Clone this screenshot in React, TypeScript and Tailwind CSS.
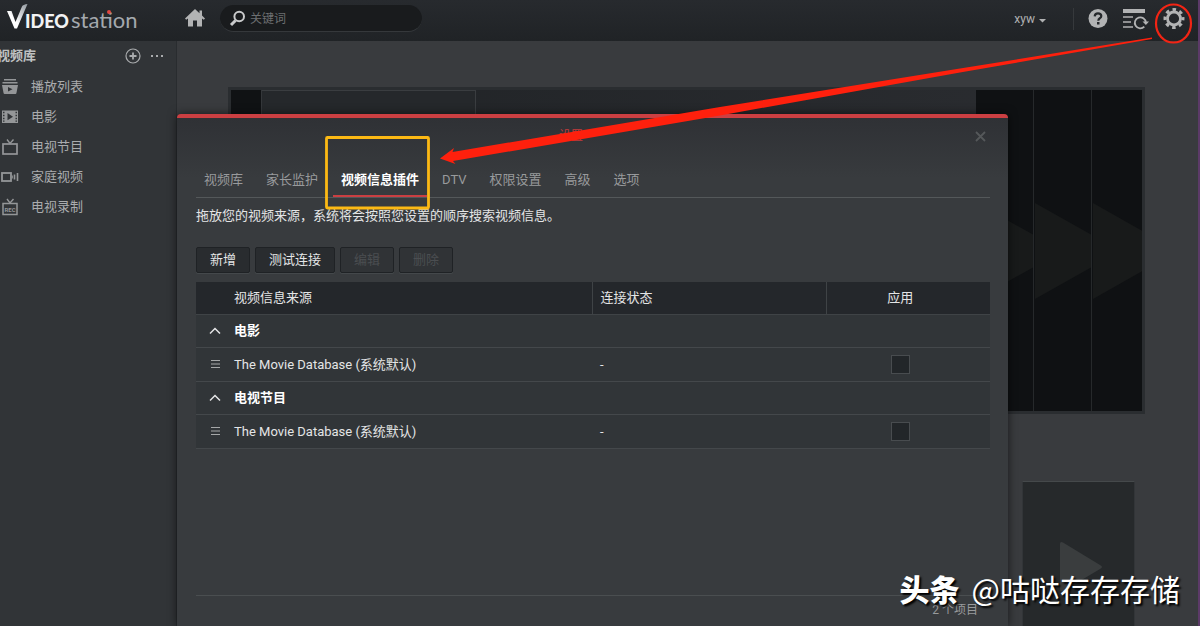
import { useState, type ReactNode } from 'react';

const libraryItems = [
  { id: 'playlist', label: '播放列表', icon: <PlaylistIcon /> },
  { id: 'movie', label: '电影', icon: <MovieIcon /> },
  { id: 'tvshow', label: '电视节目', icon: <TvIcon /> },
  { id: 'home', label: '家庭视频', icon: <CamcorderIcon /> },
  { id: 'record', label: '电视录制', icon: <RecordingIcon /> },
];

const tabs = ['视频库', '家长监护', '视频信息插件', 'DTV', '权限设置', '高级', '选项'];

const actions = [
  { label: '新增', disabled: false },
  { label: '测试连接', disabled: false },
  { label: '编辑', disabled: true },
  { label: '删除', disabled: true },
];

const pluginGroups = [
  { name: '电影', sources: ['The Movie Database (系统默认)'] },
  { name: '电视节目', sources: ['The Movie Database (系统默认)'] },
];

function PlaylistIcon() {
  return (
    <svg width="18" height="16" viewBox="0 0 18 16" fill="currentColor">
      <path d="M3 0h12v1.6H3zM1.500 3h15v1.600h-15z" />
      <path fillRule="evenodd" d="M1 6h16l-1.600 8.200q-.2.8-1 .8H3.600q-.8 0-1-.8zM7 8v4.600l4.500-2.300z" />
    </svg>
  );
}

function MovieIcon() {
  return (
    <svg width="18" height="16" viewBox="0 0 18 16" fill="currentColor">
      <path
        fillRule="evenodd"
        d="M1 1.500h16V14H1zM2 2.800v1.500h1.500V2.800zM2 5.800v1.500h1.500V5.800zM2 8.700v1.500h1.500V8.700zM2 11.500v1.300h1.500V11.500zM14.500 2.800v1.500H16V2.800zM14.500 5.800v1.500H16V5.800zM14.500 8.700v1.500H16V8.700zM14.500 11.500v1.300H16V11.500zM6.500 4.100v7.200l5.500-3.600z"
      />
    </svg>
  );
}

function TvIcon() {
  return (
    <svg width="18" height="18" viewBox="0 0 18 18" fill="none" stroke="currentColor">
      <rect x="2" y="6" width="14" height="10" strokeWidth="1.700" />
      <path d="M6 1.500L9 5.500L12.500 1.500" strokeWidth="1.400" />
    </svg>
  );
}

function CamcorderIcon() {
  return (
    <svg width="18" height="16" viewBox="0 0 18 16" fill="none" stroke="currentColor">
      <rect x="1" y="4" width="9" height="8" strokeWidth="1.800" />
      <path d="M13.500 5.500v5M16.500 4v8" strokeWidth="1.600" />
      <path d="M11.300 6.500v3" />
    </svg>
  );
}

function RecordingIcon() {
  return (
    <svg width="18" height="18" viewBox="0 0 18 18" fill="none" stroke="currentColor">
      <rect x="2" y="5.500" width="14" height="11" strokeWidth="1.500" />
      <path d="M6 1L9 5L12.500 1" strokeWidth="1.400" />
      <text
        x="9"
        y="13.500"
        fontSize="6"
        fontWeight="700"
        fontFamily="Roboto, sans-serif"
        textAnchor="middle"
        fill="currentColor"
        stroke="none"
      >
        REC
      </text>
    </svg>
  );
}

function Logo() {
  return (
    <a href="#" aria-label="Video Station" className="relative flex h-10 w-[131px] items-center">
      <svg width="135" height="32" viewBox="0 0 135 32" className="shrink-0">
        <defs>
          <linearGradient id="logo-v" x1="0" x2="1" y1="1" y2="0">
            <stop offset="0.350" stopColor="#fff" />
            <stop offset="1" stopColor="#8f969d" />
          </linearGradient>
        </defs>
        <path d="M0 8h4.500l4 11L15 3.500Q16 1.500 20.500 1L10 25.500H7.500z" fill="url(#logo-v)" />
        <text x="18" y="25" fontSize="18" fontWeight="900" fontFamily="Lato, sans-serif" fill="#f2f2f3">
          IDEO
        </text>
        <text x="64" y="25" fontSize="22" fontWeight="400" fontFamily="Lato, sans-serif" fill="#a4a9ae">
          station
        </text>
        <circle cx="102" cy="9" r="2" fill="#e0453f" />
      </svg>
    </a>
  );
}

function IconButton({ label, children }: { label: string; children: ReactNode }) {
  return (
    <button aria-label={label} className="flex items-center justify-center text-[#b2b3b4] hover:text-white">
      {children}
    </button>
  );
}

function Header() {
  return (
    <header className="flex h-[41px] items-center bg-linear-to-b from-[#272a2e] to-[#202326] pb-1 pl-[7px] pr-[13px]">
      <Logo />
      <div className="ml-[47px] flex">
        <IconButton label="首页">
          <svg width="20" height="20" viewBox="0 0 20 20" fill="currentColor">
            <path d="M10 0L0 9.500l1.200 1.200L3 9.500V17.500h5v-6h4v6h5v-8l1.800 1.200L20 9.500l-3-3V1.500h-2.500v2.700z" />
          </svg>
        </IconButton>
      </div>
      <label className="ml-[15px] flex h-[27px] w-[202px] items-center rounded-full border-b border-[#35383b] bg-[#191b1d] pl-[9px]">
        <svg width="18" height="18" viewBox="0 0 18 18" fill="none" stroke="#c9cacb" className="shrink-0">
          <circle cx="10.200" cy="7.500" r="4.800" strokeWidth="2" />
          <path d="M6.500 11.500L2 16" strokeWidth="3" />
        </svg>
        <input
          type="text"
          placeholder="关键词"
          className="ml-[3px] w-full bg-transparent pt-px text-xs text-[#ccc] outline-none placeholder:text-[#6d6f71]"
        />
      </label>

      <div className="ml-auto flex items-center">
        <button className="flex items-center gap-1 text-xs text-[#b0b1b2]">
          xyw
          <svg width="7" height="4" viewBox="0 0 7 4" fill="currentColor" className="mt-1">
            <path d="M0 0h7L3.500 3.500z" />
          </svg>
        </button>
        <div className="ml-[27px] h-[22px] w-px bg-[#36393c]" />
        <div className="ml-[14px] flex items-center gap-[14px]">
          <IconButton label="帮助">
            <svg width="20" height="20" viewBox="0 0 20 20">
              <circle cx="10" cy="9.500" r="9.500" fill="currentColor" />
              <path
                d="M6.700 7.300Q6.900 4.400 10 4.400T13.300 7Q13.300 8.400 11.800 9.300Q10.300 10.200 10.300 11.700"
                fill="none"
                stroke="#26292c"
                strokeWidth="2.200"
              />
              <rect x="9" y="13" width="2.500" height="2.500" fill="#26292c" />
            </svg>
          </IconButton>
          <IconButton label="后台任务">
            <svg width="27" height="22" viewBox="0 0 27 22" fill="none" stroke="currentColor">
              <path d="M1 1h22v4H1z" fill="currentColor" stroke="none" />
              <path d="M1 9h10M1 14h8M1 19h10" strokeWidth="1.700" />
              <path d="M23.800 14.500a5.500 5.500 0 1 0-1.500 4.200" strokeWidth="1.800" />
              <path d="M20.500 13.500h6.500L23.900 17z" fill="currentColor" stroke="none" />
            </svg>
          </IconButton>
          <IconButton label="设置">
            <svg width="22" height="22" viewBox="0 0 22 22" fill="none" stroke="currentColor">
              <circle cx="11" cy="10.500" r="6.500" strokeWidth="2.800" />
              <circle cx="11" cy="10.500" r="9" strokeWidth="3" strokeDasharray="3.535 3.534" strokeDashoffset="1.767" />
            </svg>
          </IconButton>
        </div>
      </div>
    </header>
  );
}

function Sidebar() {
  return (
    <aside className="w-[177px] shrink-0 overflow-hidden border-r border-[#292c2f] bg-[#313437] text-[13px]">
      <div className="flex h-[31px] items-center pb-px pr-3 text-[#a9abad]">
        <h2 className="-ml-[3px] mr-auto font-bold text-[#bfc0c1]">视频库</h2>
        <button aria-label="新建视频库">
          <svg width="16" height="16" viewBox="0 0 16 16" fill="none" stroke="currentColor">
            <circle cx="8" cy="8" r="7" strokeWidth="1.200" />
            <path d="M8 4.500v7M4.500 8h7" strokeWidth="1.800" />
          </svg>
        </button>
        <button aria-label="更多" className="ml-[9px]">
          <svg width="14" height="4" viewBox="0 0 14 4" fill="currentColor">
            <path d="M1 1h2v2H1zM6 1h2v2H6zM11 1h2v2h-2z" />
          </svg>
        </button>
      </div>
      <nav>
        {libraryItems.map((item) => (
          <a key={item.id} href="#" className="flex h-[30px] items-center text-[#aaacae] hover:text-white">
            <span className="ml-px flex w-[18px] justify-center text-[#949698]">{item.icon}</span>
            <span className="ml-3">{item.label}</span>
          </a>
        ))}
      </nav>
    </aside>
  );
}

// Dimmed poster wall behind the settings dialog
function Backdrop() {
  return (
    <div className="pl-[51px] pr-[53px] pt-[46px]">
      <div className="flex h-[327px] border-[3px] border-[#2a2d30] bg-linear-to-r from-[#202326] to-[#2b2d31]">
        <div className="w-[31px] border-r border-[#34373a] bg-[#101214]" />
        <div className="w-[214px] border-r border-t border-[#3a3d40] bg-[#25282b]" />
        <div className="flex-1" />
        <div className="flex w-[166px] bg-[#0f1113]">
          <Stripe />
          <Stripe />
          <div className="flex flex-1 items-center overflow-hidden">
            <BigPlay />
          </div>
        </div>
      </div>
      <div className="mr-[10px] mt-[67px] flex h-[145px] justify-end">
        <div className="flex w-[113px] items-center justify-center border border-b-0 border-t-[#45494b] border-x-[#323538] bg-[#26292b]">
          <svg width="44" height="54" viewBox="0 0 44 54" className="ml-1 mt-7">
            <path d="M1 3Q1 0 4 1.500L41 24Q45 26 41 28L4 50Q1 51.500 1 48z" fill="#3a3d3e" />
          </svg>
        </div>
      </div>
    </div>
  );
}

function BigPlay() {
  return (
    <svg width="86" height="96" viewBox="0 0 86 96" className="shrink-0">
      <path d="M1 0L86 48L1 96z" fill="#181a1a" />
    </svg>
  );
}

function Stripe() {
  return (
    <div className="flex w-[58px] items-center overflow-hidden border-r border-[#26292b]">
      <BigPlay />
    </div>
  );
}

function PluginTable() {
  const [enabled, setEnabled] = useState<Record<string, boolean>>({});

  return (
    <table className="w-full table-fixed border-collapse bg-[#313538] text-left text-[13px] text-[#e4e5e6]">
      <colgroup>
        <col className="w-[38px]" />
        <col />
        <col className="w-[234px]" />
        <col className="w-[164px]" />
      </colgroup>
      <thead className="bg-[#24272b]">
        <tr className="h-8 border-b border-[#3f4346]">
          <th />
          <th className="border-r border-[#3f4346] font-normal">视频信息来源</th>
          <th className="border-r border-[#3f4346] pl-2 font-normal">连接状态</th>
          <th className="pr-4 text-center font-normal">应用</th>
        </tr>
      </thead>
      {pluginGroups.map((group) => (
        <tbody key={group.name}>
          <tr className="h-[33px] border-b border-[#44484b]">
            <td>
              <button aria-label={`折叠${group.name}`} className="flex w-full justify-center">
                <svg width="12" height="8" viewBox="0 0 12 8" fill="none" stroke="currentColor">
                  <path d="M1 6.500L6 1.500L11 6.500" strokeWidth="1.500" />
                </svg>
              </button>
            </td>
            <td colSpan={3} className="font-bold text-white">
              {group.name}
            </td>
          </tr>
          {group.sources.map((source) => (
            <tr key={source} className="h-[34px] border-b border-[#44484b]">
              <td>
                <svg width="9" height="8" viewBox="0 0 9 8" className="mx-auto" fill="#a5a7a8">
                  <path d="M0 0h9v1H0zM0 3.500h9v1H0zM0 7h9v1H0z" />
                </svg>
              </td>
              <td className="pt-0.5">{source}</td>
              <td className="pl-2 pt-0.5">-</td>
              <td className="pr-4">
                <input
                  type="checkbox"
                  aria-label={`应用 ${group.name} ${source}`}
                  checked={!!enabled[group.name]}
                  onChange={(e) => setEnabled({ ...enabled, [group.name]: e.target.checked })}
                  className="mx-auto block size-[19px] appearance-none border border-[#484c4f] bg-[#222629] checked:bg-[#c73a3a]"
                />
              </td>
            </tr>
          ))}
        </tbody>
      ))}
    </table>
  );
}

function SettingsDialog() {
  const [active, setActive] = useState('视频信息插件');

  return (
    <section
      role="dialog"
      aria-label="设置"
      className="absolute bottom-0 left-0 right-[190px] top-[73px] flex flex-col rounded-t-sm border-t-4 border-[#cb3f42] bg-[#383b3e] bg-linear-to-b from-[#2f3135] to-[#383b3e] to-[60px] pl-[19px] pr-[18px] shadow-[0_0_10px_rgba(0,0,0,0.6)]"
    >
      <div className="flex h-9 items-center justify-center">
        <h1 className="ml-auto text-xs text-[#c23b3c]">设置</h1>
        <button aria-label="关闭" className="ml-auto flex w-11 justify-end pr-1 text-[#55585a]">
          <svg width="11" height="11" viewBox="0 0 11 11" fill="none" stroke="currentColor">
            <path d="M1 1l9 9M10 1l-9 9" strokeWidth="1.800" />
          </svg>
        </button>
      </div>

      <div role="tablist" className="mt-2 flex h-9 gap-[7px] border-b border-[#54585a]">
        {tabs.map((tab) => (
          <button
            key={tab}
            role="tab"
            aria-selected={tab === active}
            onClick={() => setActive(tab)}
            className={`border-b-2 px-2 pt-0.5 text-[13px] ${
              tab === active ? 'border-[#cb3f42] font-bold text-white' : 'border-transparent text-[#989a9c]'
            }`}
          >
            {tab}
          </button>
        ))}
      </div>

      <p className="mt-2 text-[13px] leading-5 text-[#e4e5e6]">
        拖放您的视频来源，系统将会按照您设置的顺序搜索视频信息。
      </p>

      <div className="mb-[9px] mt-[21px] flex gap-[5px]">
        {actions.map((action) => (
          <button
            key={action.label}
            disabled={action.disabled}
            className="h-[26px] rounded-xs border border-[#1f2225] bg-[#292c2f] px-3 text-[13px] text-[#e4e5e6] shadow-[0_1px_0_#44484b] disabled:bg-[#303336] disabled:text-[#4b4e51]"
          >
            <span className="px-px">{action.label}</span>
          </button>
        ))}
      </div>

      <PluginTable />

      <footer className="mt-auto h-[31px] border-t border-[#4a4e50] pr-3 pt-1 text-right text-xs leading-5 text-[#989a9c]">
        2 个项目
      </footer>
    </section>
  );
}

// Callouts: ring on the gear, arrow and frame on the plugin tab
function Callouts() {
  return (
    <svg width="1200" height="626" viewBox="0 0 1200 626" className="pointer-events-none absolute left-0 top-0" fill="none">
      <ellipse cx="1173.500" cy="23.500" rx="17.500" ry="19" stroke="#f32414" strokeWidth="2.200" />
      <path d="M440 158.500L454 148L452.500 152L720 107L960 68.500L1152 37.500V39L960 72.500L720 115.500L453 161L455.500 164z" fill="#fe200d" />
      <rect x="326.500" y="137.500" width="102" height="70.500" rx="1" stroke="#fcb914" strokeWidth="2.800" />
    </svg>
  );
}

export default function App() {
  return (
    <div className="relative flex min-h-screen flex-col overflow-hidden border-r-2 border-[#5c3a68] bg-[#393b3e] font-['Roboto','Noto_Sans_CJK_SC',sans-serif]">
      <Header />
      <div className="flex flex-1">
        <Sidebar />
        <main className="relative min-w-0 flex-1">
          <Backdrop />
          <SettingsDialog />
        </main>
      </div>
      <Callouts />
      <div className="pointer-events-none absolute bottom-5 right-[18px] flex items-center gap-3 font-['Noto_Sans_CJK_SC',sans-serif] text-3xl text-white [text-shadow:2px_2px_2px_#000]">
        <span className="font-black">头条</span>
        <span>@咕哒存存存储</span>
      </div>
    </div>
  );
}
